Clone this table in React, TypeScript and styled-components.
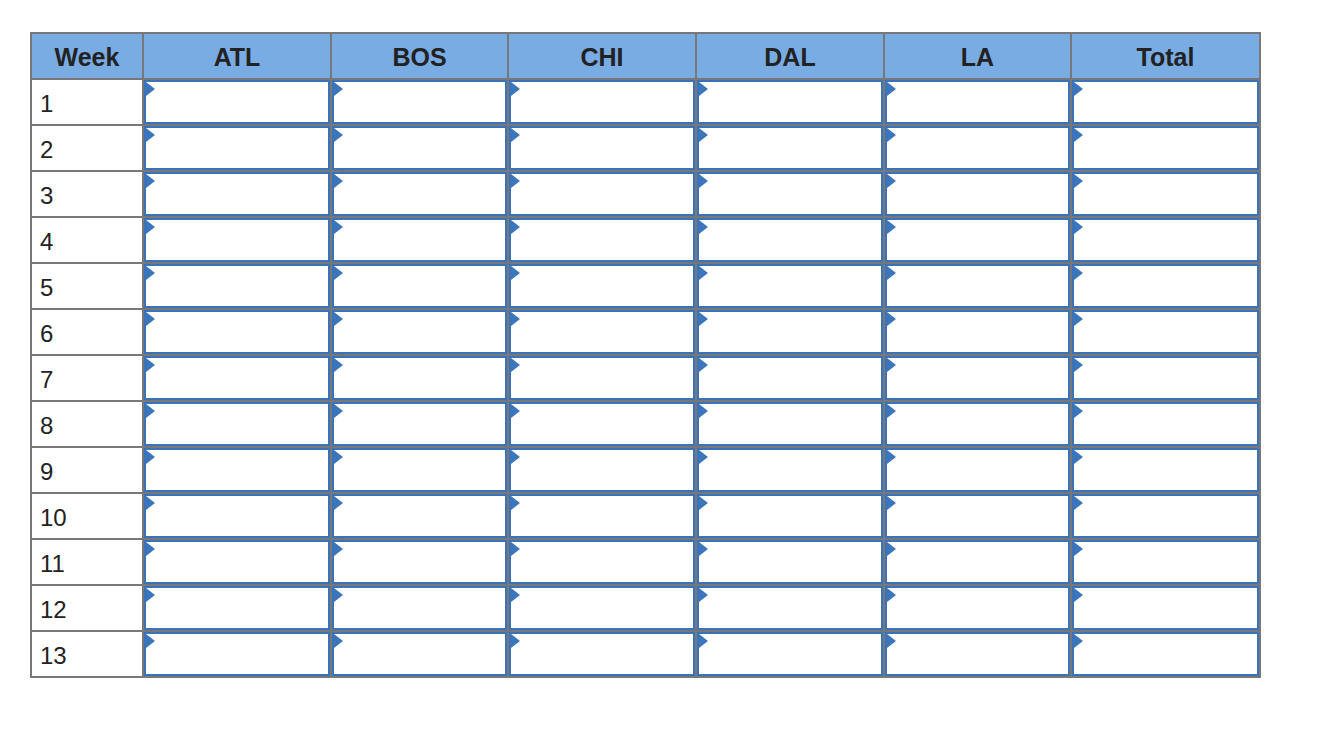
import { Fragment } from "react";
import styled, { createGlobalStyle } from "styled-components";

const GlobalStyle = createGlobalStyle`
  html, body {
    margin: 0;
    padding: 0;
    background: #ffffff;
  }
`

const Page = styled.main`
  padding: 32px 0 0 30px;
  font-family: "Liberation Sans", Arial, sans-serif;
  color: #222222;
`

const Grid = styled.div`
  display: inline-grid;
  grid-template-columns: 110px 186px 175px 186px 186px 185px 187px;
  grid-auto-rows: 44px;
  gap: 2px;
  padding: 2px;
  background: #787878;
`

const HeaderCell = styled.div`
  display: flex;
  align-items: center;
  justify-content: center;
  padding-top: 3px;
  background: #79ace3;
  font-size: 25px;
  font-weight: bold;
`

const WeekCell = styled.div`
  display: flex;
  align-items: center;
  padding: 3px 0 0 8px;
  background: #ffffff;
  font-size: 24px;
`

const EntryCell = styled.div`
  position: relative;
  box-sizing: border-box;
  background: #ffffff;
  border: 2px solid #3b73b9;

  &::before {
    content: "";
    position: absolute;
    top: 0;
    left: 0;
    width: 0;
    height: 0;
    border-top: 7px solid transparent;
    border-bottom: 7px solid transparent;
    border-left: 9px solid #3b76bd;
  }
`

const columns = ["Week", "ATL", "BOS", "CHI", "DAL", "LA", "Total"];
const weeks = Array.from({ length: 13 }, (_, i) => i + 1);

export default function App() {
  return (
    <>
      <GlobalStyle />
      <Page>
        <Grid>
          {columns.map((col) => (
            <HeaderCell key={col}>{col}</HeaderCell>
          ))}
          {weeks.map((week) => (
            <Fragment key={week}>
              <WeekCell>{week}</WeekCell>
              {columns.slice(1).map((col) => (
                <EntryCell key={col} />
              ))}
            </Fragment>
          ))}
        </Grid>
      </Page>
    </>
  )
}
